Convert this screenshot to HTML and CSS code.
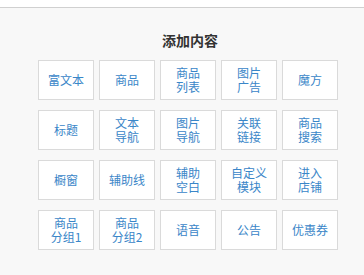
FILE: index.html
```html
<!DOCTYPE html>
<html lang="zh-CN">
<head>
    <meta charset="UTF-8">
    <meta name="viewport" content="width=device-width, initial-scale=1.0">
    <title>添加内容</title>
    <link rel="stylesheet" href="styles.css">
</head>
<body>
    <div class="topbar"></div>
    <div class="panel">
        <div class="panel-inner">
            <h3 class="panel-title">添加内容</h3>
            <div class="widget-grid">
                <button class="widget">富文本</button>
                <button class="widget">商品</button>
                <button class="widget">商品<br>列表</button>
                <button class="widget">图片<br>广告</button>
                <button class="widget">魔方</button>

                <button class="widget">标题</button>
                <button class="widget">文本<br>导航</button>
                <button class="widget">图片<br>导航</button>
                <button class="widget">关联<br>链接</button>
                <button class="widget">商品<br>搜索</button>

                <button class="widget">橱窗</button>
                <button class="widget">辅助线</button>
                <button class="widget">辅助<br>空白</button>
                <button class="widget">自定义<br>模块</button>
                <button class="widget">进入<br>店铺</button>

                <button class="widget">商品<br>分组1</button>
                <button class="widget">商品<br>分组2</button>
                <button class="widget">语音</button>
                <button class="widget">公告</button>
                <button class="widget">优惠券</button>
            </div>
        </div>
    </div>
</body>
</html>
```

FILE: styles.css
```css
body {
    margin: 0;
    font-family: "Noto Sans CJK SC", "Microsoft YaHei", sans-serif;
    background-color: #f8f8f8;
    height: 275px;
    overflow: hidden;
}
.topbar {
    height: 7px;
    background-color: #fff;
    border-bottom: 1px solid #d0d0d0;
}
.panel {
    background-color: #f8f8f8;
    padding: 22px 0 20px 38px;
}
.panel-inner {
    width: 304px;
}
.panel-title {
    margin: 0 0 10px;
    text-align: center;
    font-size: 14px;
    line-height: 20px;
    font-weight: bold;
    color: #333;
}
.widget-grid {
    display: grid;
    grid-template-columns: repeat(5, 56px);
    grid-auto-rows: 40px;
    column-gap: 5px;
    row-gap: 10px;
}
.widget {
    display: flex;
    align-items: center;
    justify-content: center;
    padding: 0;
    background-color: #fff;
    border: 1px solid #dadada;
    border-radius: 0;
    font-family: inherit;
    font-size: 12px;
    line-height: 14px;
    color: #3a86c8;
    cursor: pointer;
}
.widget:hover {
    border-color: #38f;
}
```
